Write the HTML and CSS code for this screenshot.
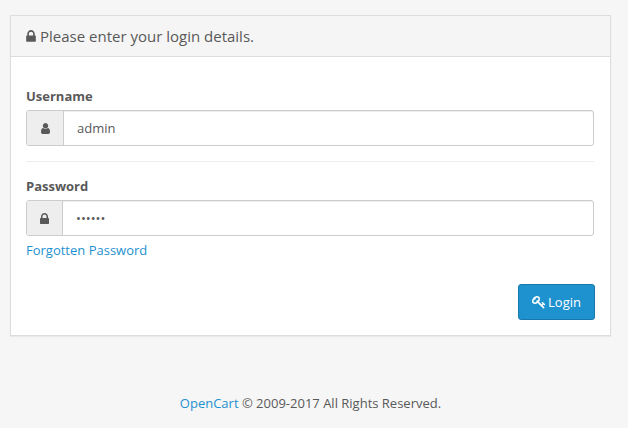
FILE: index.html
```html
<!DOCTYPE html>
<html lang="en">
<head>
    <meta charset="UTF-8">
    <title>Administration</title>
    <link rel="stylesheet" href="styles.css">
</head>
<body>
    <div class="panel">
        <div class="panel-heading">
            <h1 class="panel-title">
                <svg class="icon icon-title" viewBox="0 0 1152 1792"><path d="M320 768h512v-192q0-106-75-181t-181-75-181 75-75 181v192zm832 96v576q0 40-28 68t-68 28h-960q-40 0-68-28t-28-68v-576q0-40 28-68t68-28h32v-192q0-184 132-316t316-132 316 132 132 316v192h32q40 0 68 28t28 68z"/></svg>
                Please enter your login details.
            </h1>
        </div>
        <form class="panel-body" action="#" method="POST">
            <div class="form-group">
                <label for="username">Username</label>
                <div class="input-group">
                    <span class="addon addon-user">
                        <svg class="icon" viewBox="256 128 1280 1536"><path d="M1536 1399q0 109-62.5 187t-150.5 78h-854q-88 0-150.5-78t-62.5-187q0-85 8.5-160.5t31.5-151.5 58.5-130 94-88.5 134.5-34.5q131 128 313 128t313-128q76 0 134.5 34.5t94 88.5 58.5 130 31.5 151.5 8.5 160.5zm-256-887q0 159-112.5 271.5t-271.5 112.5-271.5-112.5-112.5-271.5 112.5-271.5 271.5-112.5 271.5 112.5 112.5 271.5z"/></svg>
                    </span>
                    <input type="text" id="username" name="username" value="admin">
                </div>
            </div>
            <div class="form-group form-group-last">
                <label for="password">Password</label>
                <div class="input-group">
                    <span class="addon addon-lock">
                        <svg class="icon" viewBox="0 128 1152 1408"><path d="M320 768h512v-192q0-106-75-181t-181-75-181 75-75 181v192zm832 96v576q0 40-28 68t-68 28h-960q-40 0-68-28t-28-68v-576q0-40 28-68t68-28h32v-192q0-184 132-316t316-132 316 132 132 316v192h32q40 0 68 28t28 68z"/></svg>
                    </span>
                    <input type="password" id="password" name="password" value="123456">
                </div>
                <a class="forgotten" href="#">Forgotten Password</a>
            </div>
            <div class="actions">
                <button type="submit">
                    <svg class="icon icon-key" viewBox="0 0 1792 1792"><path d="M832 512q0-80-56-136t-136-56-136 56-56 136q0 42 19 83-41-19-83-19-80 0-136 56t-56 136 56 136 136 56 136-56 56-136q0-42-19-83 41 19 83 19 80 0 136-56t56-136zm851 704q0 17-49 66t-66 49q-9 0-28.5-16t-36.5-33-38.5-40-24.5-26l-96 96 220 220q28 28 28 68 0 42-39 81t-81 39q-40 0-68-28l-671-671q-176 131-365 131-163 0-265.5-102.5t-102.5-265.5q0-160 95-313t248-248 313-95q163 0 265.5 102.5t102.5 265.5q0 189-131 365l355 355 96-96q-3-3-26-24.5t-40-38.5-33-36.5-16-28.5q0-17 49-66t66-49q13 0 23 10 6 6 46 44.5t82 79.5 86.5 86 73 78 28.5 41z"/></svg>
                    Login
                </button>
            </div>
        </form>
    </div>
    <footer class="footer"><a href="#">OpenCart</a> &copy; 2009-2017 All Rights Reserved.</footer>
</body>
</html>
```

FILE: styles.css
```css
* {
    box-sizing: border-box;
}

body {
    margin: 0;
    background-color: #f6f6f6;
    color: #595959;
    font-family: "Open Sans", sans-serif;
    font-size: 12px;
}

a {
    color: #1e91cf;
    text-decoration: none;
}

.icon {
    display: block;
    fill: currentColor;
}

.panel {
    margin: 15px 17px 0 10px;
    height: 321px;
    background-color: #fff;
    border: 1px solid #ddd;
    box-shadow: 0 1px 1px rgba(0, 0, 0, 0.05);
}

.panel-heading {
    height: 41px;
    padding: 0 15px;
    display: flex;
    align-items: center;
    background-color: #f5f5f5;
    border-bottom: 1px solid #ddd;
}

.panel-title {
    margin: 0;
    display: flex;
    align-items: center;
    gap: 4px;
    font-size: 15px;
    font-weight: 400;
}

.icon-title {
    width: 10px;
    height: 15px;
}

.panel-body {
    padding: 31px 16px 0 15px;
}

.form-group {
    padding-bottom: 15px;
    border-bottom: 1px solid #ededed;
    margin-bottom: 16px;
}

.form-group-last {
    border-bottom: none;
    padding-bottom: 0;
    margin-bottom: 0;
}

label {
    display: block;
    height: 17px;
    margin-bottom: 5px;
    font-size: 13px;
    line-height: 17px;
    font-weight: 700;
}

.input-group {
    display: flex;
    height: 36px;
    border: 1px solid #ccc;
    border-radius: 3px;
    overflow: hidden;
    box-shadow: inset 0 1px 1px rgba(0, 0, 0, 0.075);
}

.addon {
    display: flex;
    align-items: center;
    justify-content: center;
    background-color: #eee;
    border-right: 1px solid #ccc;
}

.addon-user {
    width: 37px;
}

.addon-user .icon {
    width: 9px;
    height: 11px;
}

.addon-lock {
    width: 36px;
}

.addon-lock .icon {
    width: 9px;
    height: 11px;
}

input {
    flex: 1;
    min-width: 0;
    padding: 0 13px;
    border: none;
    outline: none;
    background: none;
    color: #595959;
    font-family: inherit;
    font-size: 13px;
}

.forgotten {
    display: block;
    margin-top: 6px;
    font-size: 13px;
    line-height: 17px;
}

.actions {
    display: flex;
    justify-content: flex-end;
    margin: 25px -1px 0 0;
}

button {
    display: flex;
    align-items: center;
    justify-content: center;
    gap: 2px;
    width: 77px;
    height: 36px;
    padding: 0;
    background-color: #1e91cf;
    border: 1px solid #1978ab;
    border-radius: 3px;
    color: #fff;
    font-family: inherit;
    font-size: 13px;
    cursor: pointer;
}

.icon-key {
    width: 14px;
    height: 14px;
}

.footer {
    margin-top: 59px;
    padding-right: 7px;
    text-align: center;
    font-size: 13px;
    line-height: 17px;
}
```
